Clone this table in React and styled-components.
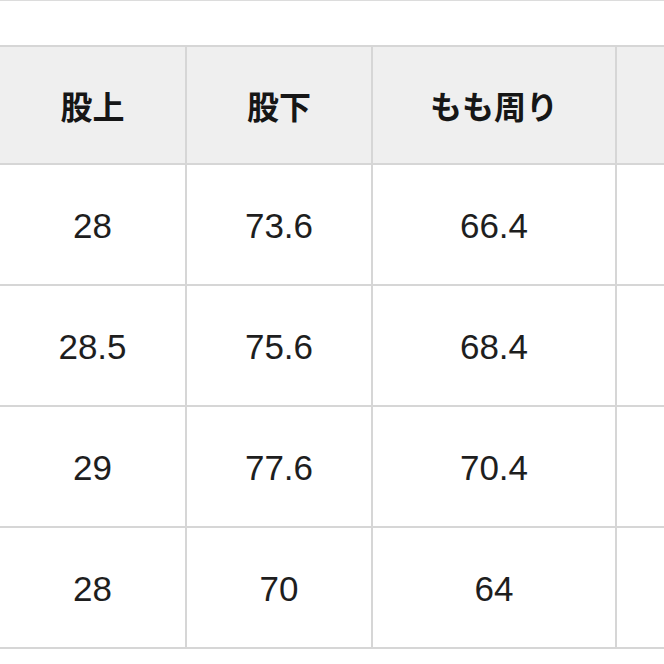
import React from "react";
import styled, { createGlobalStyle } from "styled-components";

const Global = createGlobalStyle`
  html, body { margin: 0; padding: 0; background: #fff; overflow: hidden; }
  body { width: 664px; height: 664px; }
`;

const Page = styled.div`
  width: 664px;
  height: 664px;
  overflow: hidden;
  background: #fff;
`;

const TopRule = styled.div`
  height: 1px;
  background: #dcdcdc;
  margin-bottom: 44px;
`;

const Grid = styled.div`
  display: grid;
  width: 860px;
  grid-template-columns: 185px 184px 242px 240px;
  grid-template-rows: 116px repeat(4, 119px);
  gap: 2px;
  padding: 2px 0;
  background: #d6d6d6;
`;

const Cell = styled.div`
  display: flex;
  align-items: center;
  justify-content: center;
  background: ${(p) => (p.$head ? "#efefef" : "#ffffff")};
  color: ${(p) => (p.$head ? "#161616" : "#1e1e1e")};
  font-family: ${(p) =>
    p.$head
      ? '"Noto Sans CJK JP", "Noto Sans", sans-serif'
      : '"Liberation Sans", Arial, sans-serif'};
  font-weight: ${(p) => (p.$head ? 700 : 400)};
  font-size: ${(p) => (p.$head ? "32px" : "35px")};
  padding-top: ${(p) => (p.$head ? "0" : "3px")};
  box-sizing: border-box;
`;

const headers = ["股上", "股下", "もも周り", ""];
const rows = [
  ["28", "73.6", "66.4", ""],
  ["28.5", "75.6", "68.4", ""],
  ["29", "77.6", "70.4", ""],
  ["28", "70", "64", ""],
];

export default function App() {
  return (
    <Page>
      <Global />
      <TopRule />
      <Grid>
        {headers.map((h, i) => (
          <Cell key={"h" + i} $head>
            {h}
          </Cell>
        ))}
        {rows.map((r, ri) =>
          r.map((v, ci) => <Cell key={ri + "-" + ci}>{v}</Cell>)
        )}
      </Grid>
    </Page>
  );
}
